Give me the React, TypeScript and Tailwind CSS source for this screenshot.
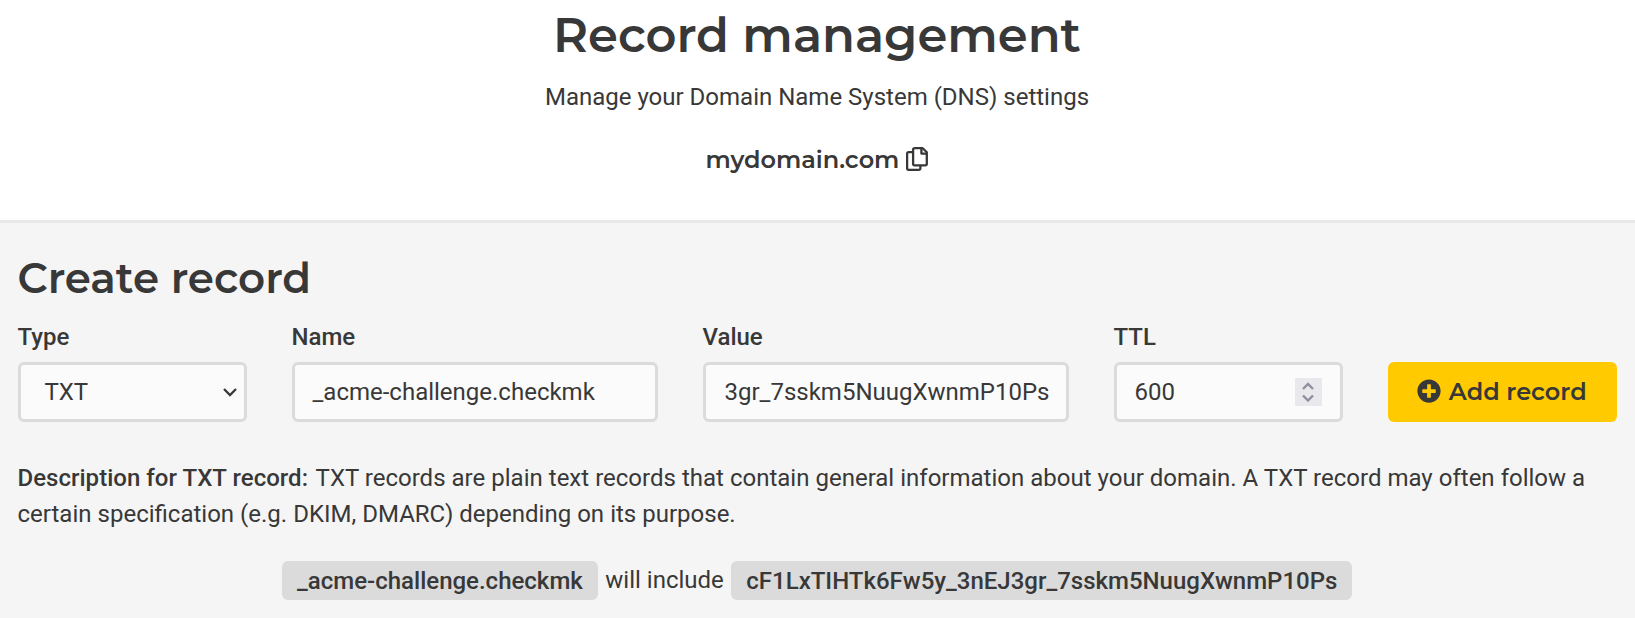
import { FaPlusCircle } from "react-icons/fa";
import type { ReactNode } from "react";

const heading = "font-[Montserrat,Inter,sans-serif] font-semibold";
const box =
  "flex h-[60px] items-center rounded-md border-[3px] border-[#dbdbdb] bg-[#fbfbfb] whitespace-nowrap overflow-hidden";

function Field({ label, children }: { label: string; children: ReactNode }) {
  return (
    <div className="flex flex-col gap-[7px]">
      <div className="h-9 font-medium">{label}</div>
      {children}
    </div>
  );
}

function CopyIcon() {
  return (
    <svg className="mb-0.5" width="22" height="24" viewBox="0 0 22 24" fill="none" stroke="currentColor" strokeWidth="2.3" strokeLinejoin="round">
      <path d="M7 5.2H2.6a1.5 1.5 0 0 0-1.5 1.5v14.6a1.5 1.5 0 0 0 1.5 1.5h10.3a1.5 1.5 0 0 0 1.5-1.5V18.5" />
      <path d="M8.6 1.2h8.1l4.1 4.1v11.5a1.5 1.5 0 0 1-1.5 1.5H8.6a1.5 1.5 0 0 1-1.5-1.5V2.7a1.5 1.5 0 0 1 1.5-1.5z" />
      <path d="M15.4 1.5v5.1h5.1" />
    </svg>
  );
}

export default function App() {
  return (
    <div className="h-[618px] w-full overflow-hidden bg-[#f5f5f5] font-[Roboto,sans-serif] text-[24px] leading-9 text-[#383838]">
      <header className="flex h-[223px] flex-col items-center border-b-[3px] border-[#e9e9e9] bg-white pr-px">
        <h1 className={`${heading} mt-1 h-[62px] text-[48px] leading-[62px]`}>Record management</h1>
        <p className="mt-[13px]">Manage your Domain Name System (DNS) settings</p>
        <div className="mt-[27px] flex items-center gap-[7px]">
          <span className={heading}>mydomain.com</span>
          <CopyIcon />
        </div>
      </header>
      <main className="pr-[18px] pl-[17.5px]">
        <h2 className={`${heading} mt-[27px] h-[57px] text-[42px] leading-[56px]`}>Create record</h2>
        <div className="mt-[12px] grid grid-cols-[229px_366px_366px_229px_229px] items-end gap-x-[45px]">
          <Field label="Type">
            <div className={`${box} justify-between pr-[6.5px] pl-6`}>
              <span>TXT</span>
              <svg className="mt-px" width="14" height="9" viewBox="0 0 14 9" fill="none" stroke="currentColor" strokeWidth="2.3">
                <path d="M1 1l6 6 6-6" />
              </svg>
            </div>
          </Field>
          <Field label="Name">
            <div className={`${box} px-[18px]`}>_acme-challenge.checkmk</div>
          </Field>
          <Field label="Value">
            <div className={`${box} justify-end pr-4 pl-[18px]`}>3gr_7sskm5NuugXwnmP10Ps</div>
          </Field>
          <Field label="TTL">
            <div className={`${box} justify-between px-[18px]`}>
              <span>600</span>
              <span className="flex h-7 w-[27px] items-center justify-center bg-[#e9e9ed]">
                <svg width="12" height="20" viewBox="0 0 12 20" fill="none" stroke="#8f8f9d" strokeWidth="2.4">
                  <path d="M1 7l5-5 5 5M1 13.5l5 5 5-5" />
                </svg>
              </span>
            </div>
          </Field>
          <button className={`${heading} flex h-[60px] items-center justify-center gap-[7.5px] rounded-md bg-[#ffcb00] whitespace-nowrap`}>
            <FaPlusCircle className="mb-0.5" size={24} />
            <span>Add record</span>
          </button>
        </div>
        <p className="mt-[38px] [word-spacing:0.08px]">
          <strong className="mr-[2px] font-medium tracking-[0.02px]">Description for TXT record:</strong> TXT records are plain text records that contain general information about your domain. A TXT record may often follow a certain specification (e.g. DKIM, DMARC) depending on its purpose.
        </p>
        <div className="mt-[29px] flex items-start justify-center gap-[7.5px]">
          <span className="h-[39px] rounded-md bg-[#dbdbdb] px-[15px] leading-[40px] font-medium">_acme-challenge.checkmk</span>
          <span className="leading-[38px]">will include</span>
          <span className="h-[39px] rounded-md bg-[#dbdbdb] px-[15px] leading-[40px] font-medium">cF1LxTIHTk6Fw5y_3nEJ3gr_7sskm5NuugXwnmP10Ps</span>
        </div>
      </main>
    </div>
  );
}
